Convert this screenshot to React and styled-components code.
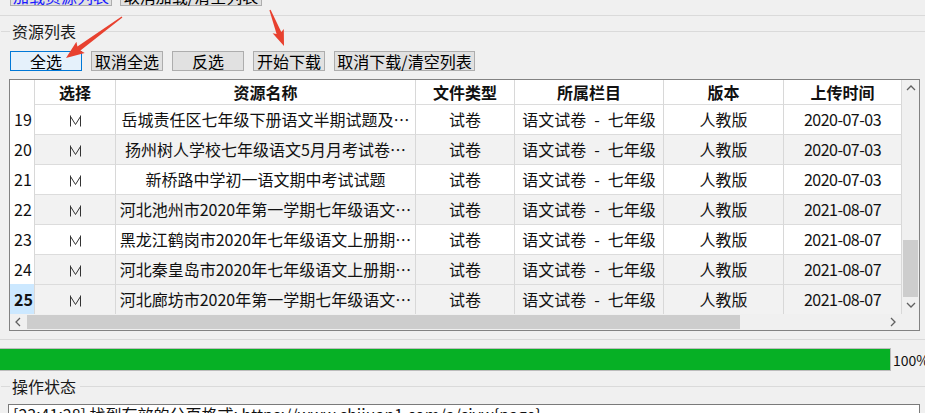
import React from "react";
import styled, { createGlobalStyle } from "styled-components";

const GlobalStyle = createGlobalStyle`
  html, body {
    margin: 0;
    padding: 0;
    height: 413px;
    overflow: hidden;
    background: #f0f0f0;
  }
  body {
    font-family: "Noto Sans CJK SC", "Microsoft YaHei", sans-serif;
    color: #000;
  }
`;

const columns = [
  { key: "pick", title: "选择", width: 81 },
  { key: "name", title: "资源名称", width: 300 },
  { key: "type", title: "文件类型", width: 99 },
  { key: "cat", title: "所属栏目", width: 149 },
  { key: "ver", title: "版本", width: 120 },
  { key: "date", title: "上传时间", width: 118 },
];

const rows = [
  { no: 19, name: "岳城责任区七年级下册语文半期试题及⋯", date: "2020-07-03" },
  { no: 20, name: "扬州树人学校七年级语文5月月考试卷⋯", date: "2020-07-03" },
  { no: 21, name: "新桥路中学初一语文期中考试试题", date: "2020-07-03" },
  { no: 22, name: "河北池州市2020年第一学期七年级语文⋯", date: "2021-08-07" },
  { no: 23, name: "黑龙江鹤岗市2020年七年级语文上册期⋯", date: "2021-08-07" },
  { no: 24, name: "河北秦皇岛市2020年七年级语文上册期⋯", date: "2021-08-07" },
  { no: 25, name: "河北廊坊市2020年第一学期七年级语文⋯", date: "2021-08-07", current: true },
];

const gridCols = `25px ${columns.map((c) => c.width + "px").join(" ")}`;

const Page = styled.div`
  position: relative;
  width: 925px;
  height: 413px;
`;

const TopPanel = styled.div`
  height: 15px;
  border-bottom: 1px solid #dadada;
`;

const TopStrip = styled.div`
  height: 6px;
  overflow: hidden;
  display: flex;
  align-items: flex-end;
  gap: 8px;
  padding-left: 10px;
`;

const WinButton = styled.button`
  flex: none;
  box-sizing: border-box;
  width: ${(p) => p.$w}px;
  height: 20px;
  padding: 0;
  margin: 0;
  font-family: inherit;
  font-size: 16px;
  line-height: 18px;
  color: ${(p) => (p.$blue ? "#1a1aff" : "#000")};
  background: ${(p) => (p.$focus ? "#e5f1fb" : "#e1e1e1")};
  border: 1px solid ${(p) => (p.$focus ? "#0078d7" : "#adadad")};
  white-space: nowrap;
`;

const Group = styled.section`
  padding-top: 7px;
  border-bottom: ${(p) => (p.$closed ? "1px solid #dadada" : "none")};
  padding-bottom: ${(p) => (p.$closed ? "8px" : "0")};
`;

const GroupHead = styled.div`
  display: flex;
  align-items: center;
  height: 17px;
  font-size: 16px;
  line-height: 17px;
  color: #1a1a1a;

  &::before {
    content: "";
    width: 9px;
    height: 1px;
    margin-left: 1px;
    margin-right: 2px;
    background: #dadada;
  }
  &::after {
    content: "";
    flex: 1;
    height: 1px;
    margin-left: 4px;
    background: #dadada;
  }
`;

const ButtonRow = styled.div`
  display: flex;
  gap: 9px;
  margin-top: 11px;
  padding-left: 10px;
`;

const TableFrame = styled.div`
  margin: 8px 0 0 9px;
  width: 911px;
  height: 252px;
  box-sizing: border-box;
  border: 1px solid #828282;
  display: grid;
  grid-template-columns: 892px 17px;
  grid-template-rows: 234px 16px;
  background: #fff;
`;

const DataGrid = styled.div`
  display: grid;
  grid-template-columns: ${gridCols};
  grid-auto-rows: 30px;
  grid-template-rows: 24px;
  overflow: hidden;
  font-size: 16px;
`;

const HeadCell = styled.div`
  background: #fff;
  font-weight: bold;
  text-align: center;
  line-height: 24px;
  border-right: 1px solid #d8d8d8;
  color: #111;
`;

const RowHead = styled.div`
  background: ${(p) => (p.$current ? "#cce8ff" : "#fff")};
  font-weight: ${(p) => (p.$current ? "bold" : "normal")};
  padding-left: 4px;
  line-height: 30px;
  border-right: 1px solid #d8d8d8;
  color: #111;
`;

const Cell = styled.div`
  background: ${(p) => (p.$alt ? "#f2f2f2" : "#fff")};
  text-align: center;
  line-height: 29px;
  white-space: nowrap;
  overflow: hidden;
  border-right: 1px solid #d8d8d8;
  border-top: 1px solid #dcdcdc;
  color: #111;
  letter-spacing: ${(p) => (p.$narrow ? "-0.5px" : "normal")};
`;

const VScroll = styled.div`
  display: flex;
  flex-direction: column;
  background: #f0f0f0;
`;

const HScroll = styled.div`
  display: flex;
  background: #f0f0f0;
`;

const ArrowBtn = styled.div`
  flex: none;
  width: 17px;
  height: ${(p) => (p.$h ? p.$h : 17)}px;
  display: flex;
  align-items: center;
  justify-content: center;
`;

const VTrack = styled.div`
  flex: 1;
  display: flex;
  flex-direction: column;
  justify-content: flex-end;
  align-items: center;
`;

const VThumb = styled.div`
  width: 15px;
  height: 57px;
  background: #cdcdcd;
`;

const HTrack = styled.div`
  flex: 1;
  display: flex;
  align-items: center;
`;

const HThumb = styled.div`
  width: 713px;
  height: 14px;
  background: #cdcdcd;
`;

const Corner = styled.div`
  background: #f0f0f0;
`;

const ProgressRow = styled.div`
  display: flex;
  align-items: center;
  margin-top: 8px;
  height: 23px;
  white-space: nowrap;
`;

const ProgressTrack = styled.div`
  flex: none;
  width: 891px;
  height: 23px;
  box-sizing: border-box;
  border: 1px solid #bcbcbc;
  border-left: none;
  background: #e6e6e6;
`;

const ProgressFill = styled.div`
  height: 100%;
  background: #06b025;
`;

const ProgressLabel = styled.span`
  flex: none;
  margin-left: 2px;
  font-size: 14px;
  color: #111;
`;

const LogBox = styled.div`
  margin: 9px 5px 0 8px;
  height: 60px;
  box-sizing: border-box;
  border: 1px solid #7a7a7a;
  background: #fff;
  padding: 0 4px;
  font-size: 16px;
  line-height: 19px;
  color: #111;
  white-space: nowrap;
`;

const Overlay = styled.svg`
  position: absolute;
  left: 0;
  top: 0;
  pointer-events: none;
`;

const Tick = () => (
  <svg width="13" height="12" viewBox="0 0 13 12" style={{ verticalAlign: "-1px" }}>
    <path d="M1.5 0.5v11M11.5 0.5v11M1.5 1.5l5 8 5-8" fill="none" stroke="#333" strokeWidth="1" />
  </svg>
);

const Chevron = ({ dir }) => {
  const d = {
    up: "M1 6l4-4 4 4",
    down: "M1 2l4 4 4-4",
    left: "M6 1L2 5l4 4",
    right: "M2 1l4 4-4 4",
  }[dir];
  return (
    <svg width="10" height="10" viewBox="0 0 10 10">
      <path d={d} fill="none" stroke="#606060" strokeWidth="1.3" />
    </svg>
  );
};

// tapered arrow: thin tail, widening shaft, triangular head at (x2, y2)
function arrowPoints(x1, y1, x2, y2, headLen = 15, headW = 13) {
  const dx = x2 - x1;
  const dy = y2 - y1;
  const len = Math.hypot(dx, dy);
  const ux = dx / len;
  const uy = dy / len;
  const px = -uy;
  const py = ux;
  const bx = x2 - ux * headLen;
  const by = y2 - uy * headLen;
  const pt = (x, y) => `${x.toFixed(1)},${y.toFixed(1)}`;
  return [
    pt(x1 + px * 0.6, y1 + py * 0.6),
    pt(bx + px * 2.5, by + py * 2.5),
    pt(bx + px * headW / 2 - ux * 2, by + py * headW / 2 - uy * 2),
    pt(x2, y2),
    pt(bx - px * headW / 2 - ux * 2, by - py * headW / 2 - uy * 2),
    pt(bx - px * 2.5, by - py * 2.5),
    pt(x1 - px * 0.6, y1 - py * 0.6),
  ].join(" ");
}

export default function App() {
  const cellText = (row, key) => {
    switch (key) {
      case "pick":
        return <Tick />;
      case "name":
        return row.name;
      case "type":
        return "试卷";
      case "cat":
        return "语文试卷\u2002-\u2002七年级";
      case "ver":
        return "人教版";
      default:
        return row.date;
    }
  };

  return (
    <Page>
      <GlobalStyle />
      <TopPanel>
        <TopStrip>
          <WinButton $w={102} $blue>加载资源列表</WinButton>
          <WinButton $w={142}>取消加载/清空列表</WinButton>
        </TopStrip>
      </TopPanel>

      <Group $closed>
        <GroupHead>资源列表</GroupHead>
        <ButtonRow>
          <WinButton $w={72} $focus>全选</WinButton>
          <WinButton $w={72}>取消全选</WinButton>
          <WinButton $w={72}>反选</WinButton>
          <WinButton $w={72}>开始下载</WinButton>
          <WinButton $w={141}>取消下载/清空列表</WinButton>
        </ButtonRow>

        <TableFrame>
          <DataGrid>
            <HeadCell />
            {columns.map((c) => (
              <HeadCell key={c.key}>{c.title}</HeadCell>
            ))}
            {rows.map((r, i) => (
              <React.Fragment key={r.no}>
                <RowHead $current={r.current}>{r.no}</RowHead>
                {columns.map((c) => (
                  <Cell key={c.key} $alt={i % 2 === 1 || r.current} $narrow={c.key === "date"}>
                    {cellText(r, c.key)}
                  </Cell>
                ))}
              </React.Fragment>
            ))}
          </DataGrid>
          <VScroll>
            <ArrowBtn>
              <Chevron dir="up" />
            </ArrowBtn>
            <VTrack>
              <VThumb />
            </VTrack>
            <ArrowBtn>
              <Chevron dir="down" />
            </ArrowBtn>
          </VScroll>
          <HScroll>
            <ArrowBtn $h={16}>
              <Chevron dir="left" />
            </ArrowBtn>
            <HTrack>
              <HThumb />
            </HTrack>
            <ArrowBtn $h={16}>
              <Chevron dir="right" />
            </ArrowBtn>
          </HScroll>
          <Corner />
        </TableFrame>
      </Group>

      <ProgressRow>
        <ProgressTrack>
          <ProgressFill style={{ width: "100%" }} />
        </ProgressTrack>
        <ProgressLabel>100%</ProgressLabel>
      </ProgressRow>

      <Group>
        <GroupHead>操作状态</GroupHead>
        <LogBox>[23:41:28] 找到有效的分页格式: https://www.shijuan1.com/a/sjyw{"{page}"}</LogBox>
      </Group>

      <Overlay width="925" height="413" viewBox="0 0 925 413">
        <polygon points={arrowPoints(122, 17, 66, 58, 16, 14)} fill="#e8412f" />
        <polygon points={arrowPoints(270, 10, 284, 46, 14, 12)} fill="#e8412f" />
      </Overlay>
    </Page>
  );
}
